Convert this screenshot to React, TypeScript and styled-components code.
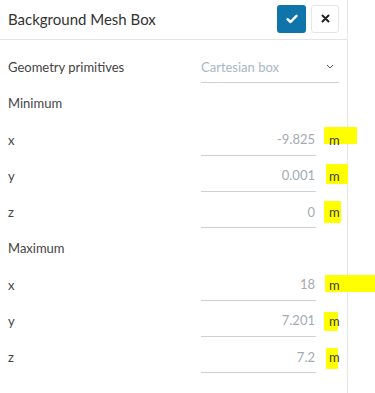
import styled, { createGlobalStyle } from "styled-components";

const GlobalStyle = createGlobalStyle`
    html, body {
        margin: 0;
        padding: 0;
        background: #ffffff;
        font-family: Lato, "Open Sans", sans-serif;
    }
`;

interface Mark {
    left: number;
    top: number;
    width: number;
    height: number;
}

interface Coord {
    axis: string;
    value: string;
    mark: Mark;
}

const minimum: Coord[] = [
    { axis: "x", value: "-9.825", mark: { left: -5, top: 5, width: 33, height: 17 } },
    { axis: "y", value: "0.001", mark: { left: -3, top: 6, width: 22, height: 20 } },
    { axis: "z", value: "0", mark: { left: -5, top: 7, width: 17, height: 22 } },
];

const maximum: Coord[] = [
    { axis: "x", value: "18", mark: { left: -4, top: 8, width: 51, height: 17 } },
    { axis: "y", value: "7.201", mark: { left: -5, top: 9, width: 14, height: 19 } },
    { axis: "z", value: "7.2", mark: { left: -3, top: 9, width: 12, height: 21 } },
];

const CheckIcon = () => (
    <svg width="12" height="10" viewBox="0 0 12 10">
        <path d="M1.5 5.2 L4.5 8 L10.5 1.8" fill="none" stroke="#ffffff" strokeWidth="2.4" strokeLinecap="round" strokeLinejoin="round" />
    </svg>
);

const CloseIcon = () => (
    <svg width="9" height="9" viewBox="0 0 9 9">
        <path d="M1.5 1.5 L7.5 7.5 M7.5 1.5 L1.5 7.5" fill="none" stroke="#222222" strokeWidth="2" strokeLinecap="round" />
    </svg>
);

const Chevron = () => (
    <svg width="8" height="5" viewBox="0 0 8 5">
        <path d="M1 1 L4 4 L7 1" fill="none" stroke="#555555" strokeWidth="1" />
    </svg>
);

const CoordRow = ({ axis, value, mark }: Coord) => (
    <Row>
        <Label>{axis}</Label>
        <NumberGroup>
            <NumberField>{value}</NumberField>
            <Unit>
                <Highlight $left={mark.left} $top={mark.top} $width={mark.width} $height={mark.height} />
                <UnitText>m</UnitText>
            </Unit>
        </NumberGroup>
    </Row>
);

const App = () => {
    return (
        <>
            <GlobalStyle />
            <Panel>
                <Header>
                    <Title>Background Mesh Box</Title>
                    <Actions>
                        <ConfirmButton><CheckIcon /></ConfirmButton>
                        <CancelButton><CloseIcon /></CancelButton>
                    </Actions>
                </Header>
                <Content>
                    <Row>
                        <Label>Geometry primitives</Label>
                        <SelectField>
                            <span>Cartesian box</span>
                            <Chevron />
                        </SelectField>
                    </Row>
                    <Row>
                        <Label>Minimum</Label>
                    </Row>
                    {minimum.map((c) => <CoordRow key={"min" + c.axis} {...c} />)}
                    <Row>
                        <Label>Maximum</Label>
                    </Row>
                    {maximum.map((c) => <CoordRow key={"max" + c.axis} {...c} />)}
                </Content>
            </Panel>
        </>
    );
};

const Panel = styled.div`
    width: 347px;
    height: 393px;
    border-right: 1px solid #e8e8e8;
    box-sizing: content-box;
`;

const Header = styled.div`
    height: 39px;
    border-bottom: 1px solid #e4e4e4;
    display: flex;
    align-items: center;
    justify-content: space-between;
    padding: 0 8px;
`;

const Title = styled.div`
    font-size: 15px;
    color: #333333;
    margin-top: -1px;
`;

const Actions = styled.div`
    display: flex;
    gap: 5px;
    margin-top: -2px;
`;

const ConfirmButton = styled.button`
    width: 29px;
    height: 28px;
    border: none;
    border-radius: 3px;
    background: #0f74a9;
    display: flex;
    align-items: center;
    justify-content: center;
    padding: 0;
`;

const CancelButton = styled.button`
    width: 28px;
    height: 28px;
    border: 1px solid #e6e6e6;
    border-radius: 3px;
    background: #ffffff;
    display: flex;
    align-items: center;
    justify-content: center;
    padding: 0;
`;

const Content = styled.div`
    padding: 9px 8px 0 8px;
`;

const Row = styled.div`
    height: 36.25px;
    display: flex;
    align-items: center;
    justify-content: space-between;
`;

const Label = styled.div`
    font-size: 13px;
    color: #444444;
`;

const SelectField = styled.div`
    width: 138px;
    height: 32px;
    box-sizing: border-box;
    border-bottom: 1px solid #ccd1d6;
    display: flex;
    align-items: center;
    justify-content: space-between;
    padding-right: 5px;
    font-size: 13px;
    color: #a9b7c6;
`;

const NumberGroup = styled.div`
    display: flex;
    align-items: center;
    height: 100%;
`;

const NumberField = styled.div`
    width: 115px;
    height: 32px;
    box-sizing: border-box;
    border-bottom: 1px solid #ccd1d6;
    display: flex;
    align-items: center;
    justify-content: flex-end;
    padding-right: 1px;
    font-size: 13px;
    color: #a4abb3;
`;

const Unit = styled.div`
    position: relative;
    width: 23px;
    height: 100%;
    display: flex;
    align-items: center;
    padding-left: 13px;
    box-sizing: border-box;
`;

const Highlight = styled.span<{ $left: number; $top: number; $width: number; $height: number }>`
    position: absolute;
    left: ${(p) => 13 + p.$left}px;
    top: ${(p) => p.$top}px;
    width: ${(p) => p.$width}px;
    height: ${(p) => p.$height}px;
    background: #ffff00;
    border-radius: 1px;
`;

const UnitText = styled.span`
    position: relative;
    font-size: 13px;
    color: #3a3a2a;
`;

export default App;
